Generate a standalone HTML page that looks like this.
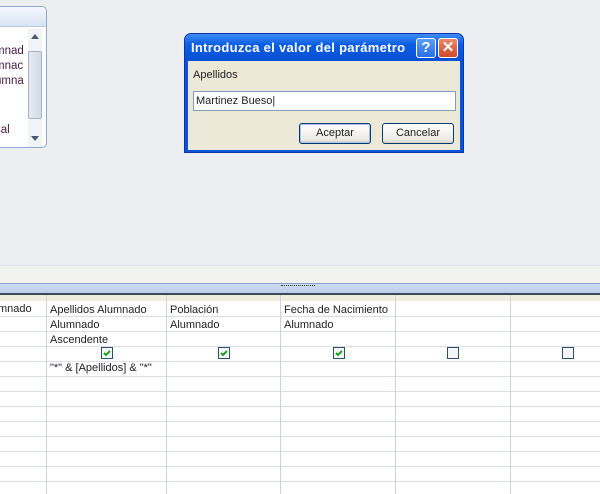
<!DOCTYPE html>
<html><head><meta charset="utf-8"><style>
*{margin:0;padding:0;box-sizing:border-box}
body{width:600px;height:494px;overflow:hidden;background:#eceef2;font-family:"Liberation Sans",sans-serif;font-size:11px;position:relative;color:#222}
.abs{position:absolute}
</style></head><body>
<div class="abs" style="left:-4px;top:6px;width:51px;height:142px;border:1px solid #8fa9cf;border-radius:5px;background:#fff;overflow:hidden">
 <div style="height:20px;background:linear-gradient(#f4f8fd,#d9e5f4);border-bottom:1px solid #b8c9e2"></div>
 <div class="abs" style="left:-2px;top:37px;color:#4a2040;line-height:15px;font-size:11.5px">mnad<br>mnac<br>umna</div>
 <div class="abs" style="left:-2px;top:117px;color:#4a2040;font-size:11.5px">cal</div>
 <div class="abs" style="left:31px;top:22px;width:14px;height:118px;background:#f1f3f7">
  <div class="abs" style="left:3px;top:5px;width:0;height:0;border-left:4px solid transparent;border-right:4px solid transparent;border-bottom:5px solid #4b5a70"></div>
  <div class="abs" style="left:0;top:22px;width:14px;height:68px;border:1px solid #a8b4c6;border-radius:2px;background:linear-gradient(90deg,#e6ebf2,#d3dbe6)"></div>
  <div class="abs" style="left:3px;top:107px;width:0;height:0;border-left:4px solid transparent;border-right:4px solid transparent;border-top:5px solid #4b5a70"></div>
 </div>
</div>
<div class="abs" style="left:184px;top:33px;width:280px;height:120px;background:#0a52d8;border-radius:7px 7px 0 0;border:1px solid #0836a8">
 <div class="abs" style="left:0;top:0;width:278px;height:27px;border-radius:6px 6px 0 0;background:linear-gradient(#3d8cf6,#0b5de2 40%,#0850d4)"></div>
 <div class="abs" style="left:6px;top:6px;color:#fff;font-weight:bold;font-size:13px;letter-spacing:0.3px">Introduzca el valor del parámetro</div>
 <div class="abs" style="left:231px;top:4px;width:20px;height:20px;border:1px solid #fff;border-radius:3px;background:linear-gradient(#5a9cf8,#2a6ee8);color:#fff;font-weight:bold;font-size:15px;text-align:center;line-height:18px">?</div>
 <div class="abs" style="left:253px;top:4px;width:20px;height:20px;border:1px solid #fff;border-radius:3px;background:linear-gradient(#e88a6a,#d0482a);color:#fff;font-weight:bold;font-size:15px;text-align:center;line-height:18px">✕</div>
 <div class="abs" style="left:3px;top:27px;width:272px;height:89px;background:#ece9d8">
  <div class="abs" style="left:5px;top:8px;font-size:11px">Apellidos</div>
  <div class="abs" style="left:5px;top:30px;width:263px;height:20px;background:#fff;border:1px solid #7f9db9;padding:3px 2px;font-size:11px">Martinez Bueso|</div>
  <div class="abs" style="left:111px;top:62px;width:72px;height:21px;border:1px solid #003c74;border-radius:3px;background:linear-gradient(#fff,#ecebe6 80%,#d6d0c5);box-shadow:inset 0 0 0 1px #a8c0ea;text-align:center;line-height:19px">Aceptar</div>
  <div class="abs" style="left:194px;top:62px;width:72px;height:21px;border:1px solid #003c74;border-radius:3px;background:linear-gradient(#fff,#ecebe6 80%,#d6d0c5);text-align:center;line-height:19px">Cancelar</div>
 </div>
</div>
<div class="abs" style="left:0;top:265px;width:600px;height:18px;background:#f2f2f0;border-top:1px solid #dfe3ea"></div>
<div class="abs" style="left:0;top:283px;width:600px;height:11px;background:linear-gradient(#cddcf0,#b8cde8);border-top:1px solid #8aa6cc"></div>
<div class="abs" style="left:281px;top:285px;width:34px;height:1px;border-top:1px dotted #333"></div>
<div class="abs" style="left:0;top:293px;width:600px;height:2px;background:#3d4a5c"></div>
<div class="abs" style="left:0;top:295px;width:600px;height:199px;background:#fff">
 <div class="abs" style="left:0;top:0;width:600px;height:6px;background:#eeeedf"></div>
 <svg class="abs" style="left:0;top:0" width="600" height="199">
  <g stroke="#dcdee6" stroke-width="1">
   <line x1="0" y1="21.5" x2="600" y2="21.5"/><line x1="0" y1="36.5" x2="600" y2="36.5"/><line x1="0" y1="51.5" x2="600" y2="51.5"/><line x1="0" y1="66.5" x2="600" y2="66.5"/><line x1="0" y1="81.5" x2="600" y2="81.5"/><line x1="0" y1="96.5" x2="600" y2="96.5"/><line x1="0" y1="111.5" x2="600" y2="111.5"/><line x1="0" y1="126.5" x2="600" y2="126.5"/><line x1="0" y1="141.5" x2="600" y2="141.5"/><line x1="0" y1="156.5" x2="600" y2="156.5"/><line x1="0" y1="171.5" x2="600" y2="171.5"/><line x1="0" y1="186.5" x2="600" y2="186.5"/>
  </g>
  <g stroke="#cdd0d8" stroke-width="1">
   <line x1="46.5" y1="0" x2="46.5" y2="199"/><line x1="166.5" y1="0" x2="166.5" y2="199"/><line x1="280.5" y1="0" x2="280.5" y2="199"/><line x1="395.5" y1="0" x2="395.5" y2="199"/><line x1="510.5" y1="0" x2="510.5" y2="199"/>
  </g>
  <g>
   <rect x="101.5" y="52.5" width="11" height="11" fill="#f4f6f8" stroke="#2f4f6f"/><path d="M104 58l2 2 4-4" stroke="#21a121" stroke-width="2" fill="none"/>
   <rect x="218.5" y="52.5" width="11" height="11" fill="#f4f6f8" stroke="#2f4f6f"/><path d="M221 58l2 2 4-4" stroke="#21a121" stroke-width="2" fill="none"/>
   <rect x="333.5" y="52.5" width="11" height="11" fill="#f4f6f8" stroke="#2f4f6f"/><path d="M336 58l2 2 4-4" stroke="#21a121" stroke-width="2" fill="none"/>
   <rect x="447.5" y="52.5" width="11" height="11" fill="#f4f6f8" stroke="#2f4f6f"/>
   <rect x="562.5" y="52.5" width="11" height="11" fill="#f4f6f8" stroke="#2f4f6f"/>
  </g>
 </svg>
 <div class="abs" style="left:-2px;top:8px;font-size:11px">mnado</div>
 <div class="abs" style="left:50px;top:8px;line-height:15px;font-size:11px">Apellidos Alumnado<br>Alumnado<br>Ascendente</div>
 <div class="abs" style="left:50px;top:67px;font-size:11px">"*" &amp; [Apellidos] &amp; "*"</div>
 <div class="abs" style="left:170px;top:8px;line-height:15px;font-size:11px">Población<br>Alumnado</div>
 <div class="abs" style="left:284px;top:8px;line-height:15px;font-size:11px">Fecha de Nacimiento<br>Alumnado</div>
</div>
</body></html>
